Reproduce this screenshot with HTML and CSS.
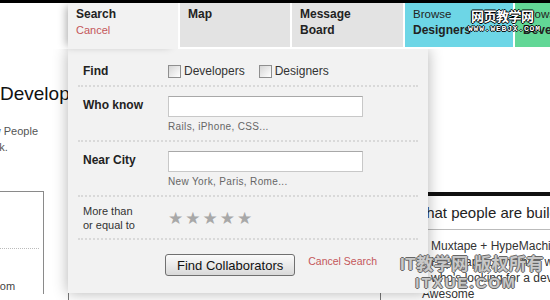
FILE: index.html
```html
<!DOCTYPE html>
<html lang="en">
  <head>
    <meta charset="UTF-8" />
    <meta name="viewport" content="width=device-width, initial-scale=1.0" />
    <title>Search Collaborators</title>
    <link rel="stylesheet" href="styles.css">
  </head>
  <body>
    <div class="topbar"></div>

    <nav class="tabs">
      <div class="tab tab-active">
        <b>Search</b>
        <a class="tab-cancel">Cancel</a>
      </div>
      <div class="tab"><b>Map</b></div>
      <div class="tab tab-message"><b>Message<br />Board</b></div>
      <div class="tab tab-designers">
        <span class="browse">Browse</span>
        <b>Designers</b>
      </div>
      <div class="tab tab-developers">
        <span class="browse">Browse</span>
        <b>Developers</b>
      </div>
    </nav>

    <div class="main">
      <div class="side">
        <h2>Developers</h2>
        <p class="side-intro">
          <span class="intro-line">Meet new People</span>
          <span class="intro-line intro-last">and work.</span>
        </p>
        <div class="side-box">
          <div class="side-item"></div>
          <div class="side-link">behance.com</div>
        </div>
      </div>
      <div class="center"></div>
      <div class="feed">
        <h3>What people are building</h3>
        <div class="project">
          <div class="project-name">Muxtape + HypeMachine</div>
          <div class="project-text">
            HypeTape.com and I want<br />
            who's looking for a developer<br />
            <span class="project-tag">Awesome</span>
          </div>
        </div>
      </div>
    </div>

    <form class="search-panel">
      <div class="field">
        <span class="field-label">Find</span>
        <div class="checks">
          <label class="check"><input type="checkbox" /> Developers</label>
          <label class="check"><input type="checkbox" /> Designers</label>
        </div>
      </div>
      <div class="field field-input">
        <label class="field-label" for="skills">Who know</label>
        <div>
          <input type="text" id="skills" />
          <div class="hint">Rails, iPhone, CSS...</div>
        </div>
      </div>
      <div class="field field-input">
        <label class="field-label" for="city">Near City</label>
        <div>
          <input type="text" id="city" />
          <div class="hint">New York, Paris, Rome...</div>
        </div>
      </div>
      <div class="field field-rating">
        <span class="field-label small">More than<br />or equal to</span>
        <div class="stars">★★★★★</div>
      </div>
      <div class="actions">
        <button type="button">Find Collaborators</button>
        <a class="cancel-search">Cancel Search</a>
      </div>
    </form>

    <div class="watermark watermark-top">
      <div class="wm-cn">网页教学网</div>
      <div class="wm-url">WWW.WEBJX.COM</div>
    </div>
    <div class="watermark watermark-bottom">
      <div class="wm-cn">IT教学网 版权所有</div>
      <div class="wm-url">ITXUE.COM</div>
    </div>
  </body>
</html>
```

FILE: styles.css
```css
* {
  box-sizing: border-box;
}

body {
  position: relative;
  width: 550px;
  height: 300px;
  margin: 0;
  overflow: hidden;
  font-family: "Liberation Sans", Arial, sans-serif;
  color: #333;
  background: #fff;
}

.topbar {
  height: 3px;
  background: #000;
}

/* tabs */

.tabs {
  position: relative;
  z-index: 2;
  display: flex;
  align-items: flex-start;
  gap: 2px;
  height: 46px;
  padding-left: 68px;
  background: #fff;
}

.tab {
  position: relative;
  flex: none;
  width: 110px;
  height: 44px;
  padding: 3px 8px 0;
  background: #e3e3e3;
  font-size: 12px;
  line-height: 16px;
  color: #222;
}

.tab b {
  display: block;
}

.tab-active {
  height: 46px;
  background: #f2f2f2;
  box-shadow: -5px 0 8px -3px rgba(0, 0, 0, 0.3);
}

.tab-cancel {
  display: block;
  font-size: 11px;
  color: #c4575a;
}

.tab-message {
  width: 111px;
}

.tab-designers {
  width: 108px;
  background: #6dd6e6;
}

.tab-developers {
  background: #62d796;
}

.browse {
  display: block;
  font-size: 11.5px;
}

/* page behind the panel */

.main {
  display: flex;
  height: 251px;
}

.side {
  flex: none;
  width: 44px;
  padding-top: 33px;
  white-space: nowrap;
}

.side h2 {
  margin: 0;
  font-size: 19px;
  line-height: 23px;
  font-weight: normal;
  color: #111;
}

.side-intro {
  margin: 18px 0 0;
  font-size: 11px;
  line-height: 16px;
  color: #555;
}

.intro-line {
  display: block;
  margin-left: -47px;
}

.intro-line.intro-last {
  margin-left: -40px;
}

.side-box {
  width: 54px;
  margin: 36px 0 0 -10px;
  border-top: 1px solid #8a8a8a;
  border-right: 1px solid #8a8a8a;
}

.side-item {
  height: 57px;
  margin-right: 4px;
  border-bottom: 1px dotted #bbb;
}

.side-link {
  margin: 29px 0 0 -41px;
  font-size: 11px;
  line-height: 16px;
  color: #444;
}

.center {
  flex: none;
  width: 313px;
  margin-left: 24px;
  border-left: 1px solid #777;
  border-right: 1px solid #777;
}

.feed {
  flex: 1;
  margin: 143px 0 0 31px;
  border-top: 4px solid #111;
  white-space: nowrap;
}

.feed h3 {
  margin: 0;
  font-size: 15px;
  line-height: 33px;
  font-weight: normal;
  color: #222;
  border-bottom: 1px solid #bbb;
}

.project {
  padding: 8px 0 0 19px;
  font-size: 12px;
  line-height: 16px;
  color: #333;
}

.project-tag {
  margin-left: -9px;
}

/* search dropdown */

.search-panel {
  position: absolute;
  z-index: 1;
  top: 49px;
  left: 68px;
  width: 360px;
  height: 244px;
  margin: 0;
  padding: 0 10px;
  background: #f2f2f2;
  box-shadow: 0 0 14px rgba(0, 0, 0, 0.3);
}

.field {
  display: grid;
  grid-template-columns: 85px 1fr;
  padding: 15px 0 7px 5px;
  border-bottom: 2px dotted #d9d9d9;
}

.field-input {
  padding: 9px 0 6px 5px;
}

.field-rating {
  padding: 7px 0 6px 5px;
}

.field-label {
  font-size: 12px;
  line-height: 14px;
  font-weight: bold;
  color: #222;
}

.field-input .field-label {
  line-height: 18px;
}

.field-label.small {
  font-size: 11px;
  font-weight: normal;
  color: #333;
}

.checks {
  display: flex;
  font-size: 12px;
  line-height: 14px;
}

.check {
  display: inline-flex;
  align-items: center;
  gap: 3px;
  margin-right: 14px;
}

.check input {
  appearance: none;
  width: 13px;
  height: 13px;
  margin: 0;
  border: 1px solid #8f8f8f;
  background: linear-gradient(135deg, #d6d6d6, #fff);
}

input[type="text"] {
  display: block;
  width: 195px;
  height: 21px;
  margin: 0;
  border: 1px solid #c8c8c8;
  border-top-color: #a8a8a8;
  background: #fff;
}

.hint {
  margin-top: 3px;
  font-size: 10px;
  line-height: 14px;
  letter-spacing: 0.35px;
  color: #666;
}

.stars {
  font-family: "DejaVu Sans", sans-serif;
  font-size: 17px;
  line-height: 28px;
  letter-spacing: 2px;
  color: #a8a8a8;
}

.actions {
  display: flex;
  align-items: flex-start;
  padding: 14px 0 0 87px;
}

.actions button {
  height: 22px;
  padding: 0 11px;
  border: 1px solid #707070;
  border-radius: 3px;
  background: linear-gradient(#fbfbfb, #d9d9d9);
  font-family: "Liberation Sans", Arial, sans-serif;
  font-size: 13px;
  color: #111;
}

.cancel-search {
  margin-left: 13px;
  font-size: 10.5px;
  line-height: 14px;
  color: #c4575a;
}

/* image watermarks */

.watermark {
  position: absolute;
  z-index: 3;
  font-weight: bold;
  white-space: nowrap;
}

.watermark-top {
  top: 7px;
  left: 471px;
  color: #fff;
  text-shadow: 1px 0 #000, -1px 0 #000, 0 1px #000, 0 -1px #000;
}

.watermark-top .wm-cn {
  font-family: "Noto Sans CJK SC", sans-serif;
  font-size: 13px;
  line-height: 17px;
  letter-spacing: -0.5px;
}

.watermark-top .wm-url {
  margin-left: -3px;
  font-family: "Liberation Mono", monospace;
  font-size: 8px;
  line-height: 9px;
  letter-spacing: 0.8px;
}

.watermark-bottom {
  top: 255px;
  left: 397px;
  width: 150px;
  color: #c8c8c8;
  text-shadow: 1px 0 #666, -1px 0 #666, 0 1px #666, 0 -1px #666;
  text-align: center;
}

.watermark-bottom .wm-cn {
  font-family: "Liberation Sans", "Noto Sans CJK SC", sans-serif;
  font-size: 17px;
  line-height: 19px;
  letter-spacing: 0.5px;
}

.watermark-bottom .wm-url {
  margin-left: -12px;
  font-size: 15px;
  line-height: 17px;
  letter-spacing: 2px;
}
```
